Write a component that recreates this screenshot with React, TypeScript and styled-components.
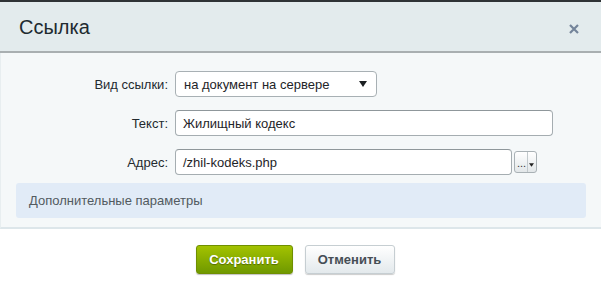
import styled, { createGlobalStyle } from 'styled-components'

const GlobalStyle = createGlobalStyle`
    html, body {
        margin: 0;
        padding: 0;
        background: #ffffff;
        font-family: "Liberation Sans", Arial, sans-serif;
    }
`

const Dialog = styled.div`
    width: 601px;
    height: 284px;
    display: flex;
    flex-direction: column;
    border-top: 2px solid #2f3336;
    box-sizing: border-box;
    background: #ffffff;
`

const Header = styled.div`
    height: 49px;
    background: #e3ebed;
    border-bottom: 2px solid #a9afb1;
    display: flex;
    align-items: center;
    justify-content: space-between;
    padding: 0 21px 0 19px;
    flex-shrink: 0;
`

const Title = styled.span`
    font-size: 20px;
    color: #212a30;
    margin-top: 2px;
`

const Close = styled.button`
    border: 0;
    background: none;
    padding: 0;
    width: 12px;
    height: 12px;
    display: flex;
    cursor: pointer;
    margin-top: 4px;
`

const Body = styled.div`
    background: #f5f8f9;
    border-bottom: 2px solid #dde6ea;
    border-left: 1px solid #e8eef0;
    padding: 18px 14px 9px 14px;
    display: flex;
    flex-direction: column;
`

const Row = styled.div`
    display: grid;
    grid-template-columns: 153px 1fr;
    column-gap: 7px;
    align-items: center;
    margin-bottom: 13px;

    &:nth-last-child(2) {
        margin-bottom: 8px;
    }
`

const Label = styled.label`
    text-align: right;
    font-size: 13px;
    color: #232a2f;
`

const Field = styled.div<{ $width: number }>`
    width: ${p => p.$width}px;
    display: flex;
    align-items: center;
    gap: 2px;
`

const Select = styled.div`
    width: 202px;
    height: 26px;
    box-sizing: border-box;
    border: 1px solid #a8b0b4;
    border-radius: 4px;
    background: #ffffff;
    display: flex;
    align-items: center;
    justify-content: space-between;
    padding: 0 9px 0 8px;
    font-size: 13px;
    color: #1e2428;
`

const Input = styled.div`
    flex: 1;
    height: 26px;
    box-sizing: border-box;
    border: 1px solid #a5adb1;
    border-top-color: #8f979b;
    border-radius: 4px;
    background: #ffffff;
    display: flex;
    align-items: center;
    padding: 0 7px;
    font-size: 13px;
    color: #1e2428;
`

const MenuButton = styled.button`
    width: 23px;
    height: 22px;
    box-sizing: border-box;
    border: 1px solid #a9b1b5;
    border-radius: 3px;
    background: linear-gradient(#ffffff, #e2e7e9);
    padding: 0 2px 3px 2px;
    display: flex;
    align-items: flex-end;
    justify-content: space-between;
    font-size: 11px;
    line-height: 1;
    color: #333;
    font-family: "Liberation Sans", Arial, sans-serif;
`

const Divider = styled.span`
    width: 1px;
    align-self: stretch;
    background: #c2c9cc;
    margin: 0 1px -3px 1px;
`

const More = styled.div`
    background: #e1ebf7;
    border-radius: 3px;
    height: 35px;
    margin: 0 1px 0 1px;
    display: flex;
    align-items: center;
    padding-left: 13px;
    font-size: 13px;
    color: #525a60;
`

const Footer = styled.div`
    flex: 1;
    display: flex;
    justify-content: center;
    align-items: flex-start;
    gap: 12px;
    padding-top: 16px;
    padding-right: 11px;
`

const Button = styled.button<{ $primary?: boolean }>`
    height: 29px;
    border-radius: 3px;
    font-family: "Liberation Sans", Arial, sans-serif;
    font-weight: bold;
    font-size: 13px;
    padding: 0;
    cursor: pointer;
    ${p =>
        p.$primary
            ? `
        width: 97px;
        color: #ffffff;
        border: 1px solid #6f8f00;
        background: linear-gradient(#a3c200, #6f9900);
        text-shadow: 0 1px 1px rgba(0,0,0,0.35);
        box-shadow: 0 1px 1px rgba(0,0,0,0.25);
    `
            : `
        width: 90px;
        color: #464e55;
        border: 1px solid #c6ced2;
        background: linear-gradient(#ffffff, #e3e9ec);
        box-shadow: 0 1px 1px rgba(0,0,0,0.2);
    `}
`

const App = () => {
    return (
        <>
            <GlobalStyle />
            <Dialog>
                <Header>
                    <Title>Ссылка</Title>
                    <Close aria-label='Закрыть'>
                        <svg width='12' height='12' viewBox='0 0 12 12'>
                            <path d='M2 2 L10 10 M10 2 L2 10' stroke='#74849a' strokeWidth='2.2' />
                        </svg>
                    </Close>
                </Header>
                <Body>
                    <Row>
                        <Label>Вид ссылки:</Label>
                        <Field $width={202}>
                            <Select>
                                <span>на документ на сервере</span>
                                <svg width='8' height='6' viewBox='0 0 8 6'>
                                    <path d='M0 0 H8 L4 6 Z' fill='#1b1f22' />
                                </svg>
                            </Select>
                        </Field>
                    </Row>
                    <Row>
                        <Label>Текст:</Label>
                        <Field $width={378}>
                            <Input>Жилищный кодекс</Input>
                        </Field>
                    </Row>
                    <Row>
                        <Label>Адрес:</Label>
                        <Field $width={362}>
                            <Input>/zhil-kodeks.php</Input>
                            <MenuButton>
                                <span>...</span>
                                <Divider />
                                <svg width='6' height='4' viewBox='0 0 6 4' style={{ marginBottom: 2 }}>
                                    <path d='M0 0 H6 L3 4 Z' fill='#222' />
                                </svg>
                            </MenuButton>
                        </Field>
                    </Row>
                    <More>Дополнительные параметры</More>
                </Body>
                <Footer>
                    <Button $primary>Сохранить</Button>
                    <Button>Отменить</Button>
                </Footer>
            </Dialog>
        </>
    )
}

export default App
